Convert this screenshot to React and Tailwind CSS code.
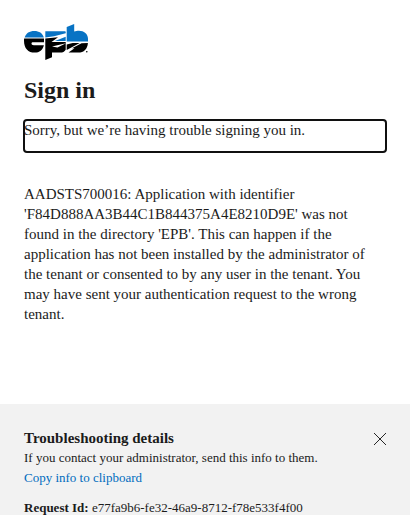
function Logo() {
  return (
    <svg className="block h-9 w-16" viewBox="0 0 64 36" role="img" aria-label="EPB">
      <g fill="#0873c4">
        <path d="M.6 13.400C2 9 5.500 6.900 10.300 6.900s8.300 2.100 9.500 6.500Z" />
        <path d="M21.300 7.200h19.500c.6 0 .9.500.9 1v1.100L30 12.300l-8.700 1.100Z" />
        <path d="m31 17 10.700-4.200V17Z" />
        <path d="M42.700 2.900 50.200 0v7.600c1.500-.7 3-.9 4.800-.9 4.900 0 9 3.200 9 8v2.800H42.700Z" />
      </g>
      <g fill="#000">
        <path d="M.1 14.600H20v3.600H9c-.9 0-1.500.4-1.500 1.300 0 1.100.8 1.700 2.300 1.700h10.100c-1.300 4.700-4.200 7.400-9.200 7.400C3.600 28.600-.7 23.500.1 14.600Z" />
        <path d="m21.300 14.600 12.700-1.300-6.500 4.600h14.200v7.800c-1.200 1.900-3 2.900-5.400 2.900H28v4.700L21.300 36Z" />
        <path d="m42.700 20.500 6-1.500h7L42.700 26Z" />
        <path d="m44.500 28.600 6-4.300H48l9.500-5.100 6.400-.3c-.4 6-4 9.700-9.600 9.700Z" />
        <circle cx="62.800" cy="27.700" r=".8" />
      </g>
      <path d="m28 22.500 14-3.300-8.500 4.300Z" fill="#fff" />
    </svg>
  );
}

export default function App() {
  return (
    <main className="flex h-[515px] w-full flex-col overflow-hidden bg-white font-['Liberation_Serif',serif] text-[15px] leading-5 text-[#1b1b1b]">
      <section className="h-[404px] shrink-0 px-6 pt-6">
        <Logo />
        <h1 className="mt-4 text-2xl leading-7 font-bold">Sign in</h1>
        <div className="mt-4 h-8 w-[362px] rounded-[3px] outline-2 -outline-offset-1 outline-[#101010]">Sorry, but we’re having trouble signing you in.</div>
        <p className="mt-8 w-[362px]">
          AADSTS700016: Application with identifier 'F84D888AA3B44C1B844375A4E8210D9E' was not found in the directory 'EPB'. This can happen if the application has not been installed by the administrator of the tenant or consented to by any user in the tenant. You may have sent your authentication request to the wrong tenant.
        </p>
      </section>
      <section className="flex flex-1 items-start justify-between bg-[#f2f2f2] px-6 pt-6">
        <div className="text-[13px]">
          <h2 className="text-[15px] font-bold">Troubleshooting details</h2>
          <p>If you contact your administrator, send this info to them.</p>
          <a className="text-[#006cbe]" href="#">Copy info to clipboard</a>
          <p className="mt-2.5 whitespace-nowrap"><strong>Request Id:</strong> e77fa9b6-fe32-46a9-8712-f78e533f4f00</p>
        </div>
        <button className="mt-[5px] size-3" aria-label="Close">
          <svg className="block size-3" viewBox="0 0 12 12" stroke="#262626" strokeWidth="1"><path d="m0 0 12 12M12 0 0 12" /></svg>
        </button>
      </section>
    </main>
  );
}
